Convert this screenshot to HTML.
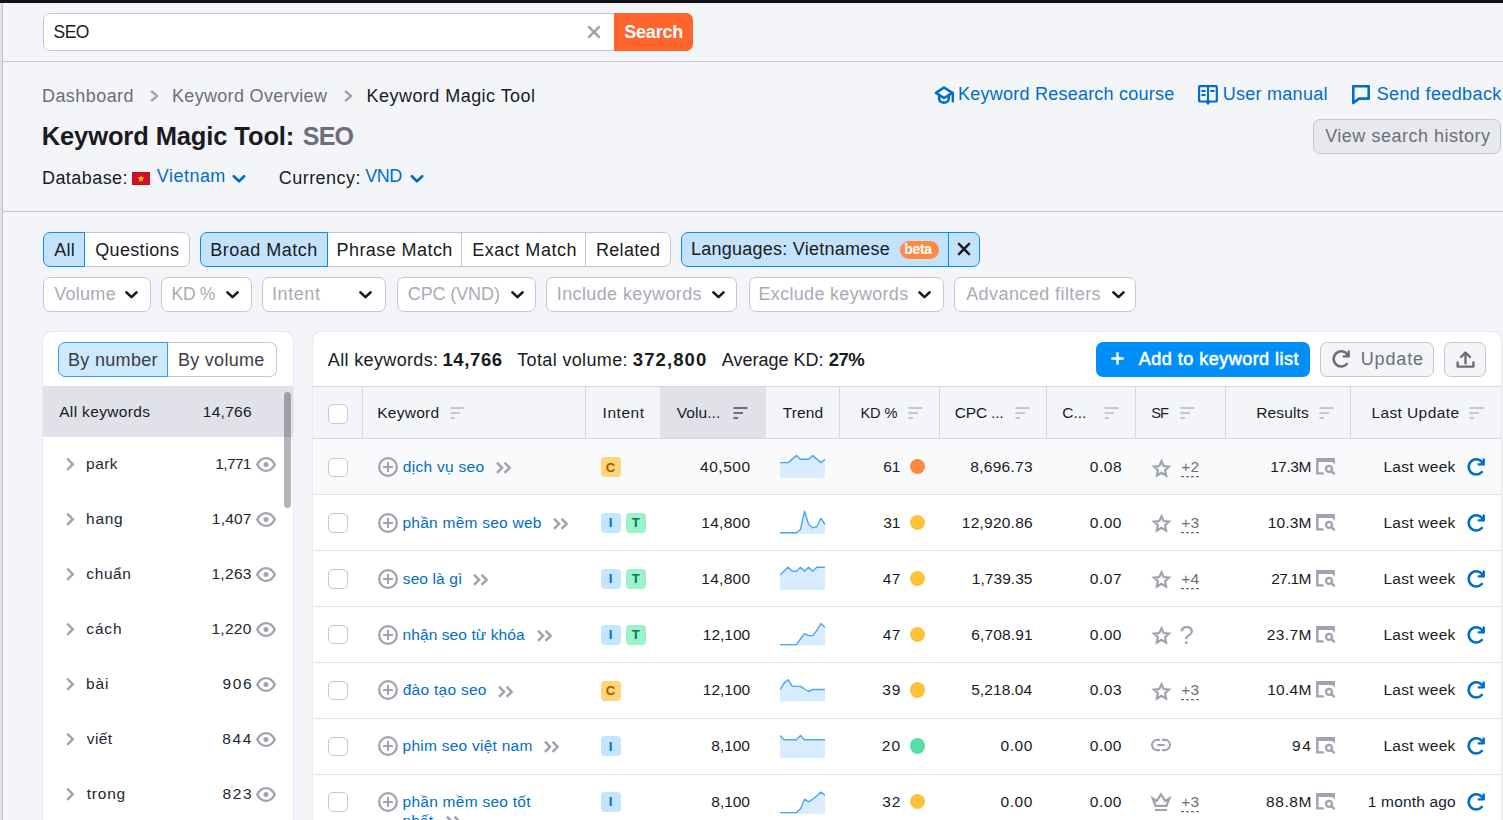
<!DOCTYPE html>
<html lang="en"><head><meta charset="utf-8"><title>Keyword Magic Tool: SEO</title>
<style>
html,body{margin:0;padding:0}
body{width:1503px;height:820px;overflow:hidden;background:#f4f5f9;font-family:"Liberation Sans", sans-serif;position:relative}
#root{position:absolute;left:0;top:0;width:1503px;height:820px;overflow:hidden}
#root div,#root svg{position:absolute;box-sizing:border-box}
.t{position:absolute;white-space:pre;line-height:1;display:block}
</style></head><body><div id="root">
<div style="left:0px;top:0px;width:1503px;height:3px;background:#111217"></div>
<div style="left:0px;top:3px;width:2px;height:817px;background:#e0e1e9"></div>
<div style="left:2px;top:3px;width:1px;height:817px;background:#c4c4c4"></div>
<div style="left:3px;top:61px;width:1500px;height:1px;background:#c4c7cf"></div>
<div style="left:3px;top:211px;width:1500px;height:1px;background:#c4c7cf"></div>
<div style="left:43px;top:13px;width:572px;height:38px;background:#fff;border:1px solid #c4c7cf;border-radius:7px 0 0 7px"></div>
<div style="left:614px;top:13px;width:79px;height:38px;background:#ff642d;border-radius:0 7px 7px 0"></div>
<svg style="left:586px;top:24px" width="16" height="16" viewBox="0 0 16 16"><path d="M3.1 3.1 L12.9 12.9 M12.9 3.1 L3.1 12.9" stroke="#a0a2b0" stroke-width="2.5" fill="none" stroke-linecap="round"/></svg>
<svg style="left:148px;top:88px" width="12" height="16" viewBox="0 0 12 16"><path d="M3.2 2.8 L9 8 L3.2 13.2" stroke="#a0a2b0" stroke-width="2.4" fill="none"/></svg>
<svg style="left:342px;top:88px" width="12" height="16" viewBox="0 0 12 16"><path d="M3.2 2.8 L9 8 L3.2 13.2" stroke="#a0a2b0" stroke-width="2.4" fill="none"/></svg>
<svg style="left:132px;top:172px" width="18" height="13" viewBox="0 0 18 13"><rect width="18" height="13" fill="#b50d1f"/><rect x="0.4" y="0.5" width="17.2" height="11.7" fill="#cf1126"/><polygon points="9,3 9.9,5.6 12.6,5.6 10.4,7.2 11.2,9.9 9,8.3 6.8,9.9 7.6,7.2 5.4,5.6 8.1,5.6" fill="#fdc91a"/></svg>
<svg style="left:232px;top:174px" width="14" height="10" viewBox="0 0 14 10"><path d="M1.8 2.2 L7 7.3 L12.2 2.2" stroke="#006dca" stroke-width="2.6" fill="none" stroke-linecap="round" stroke-linejoin="round"/></svg>
<svg style="left:410px;top:174px" width="14" height="10" viewBox="0 0 14 10"><path d="M1.8 2.2 L7 7.3 L12.2 2.2" stroke="#006dca" stroke-width="2.6" fill="none" stroke-linecap="round" stroke-linejoin="round"/></svg>
<svg style="left:933px;top:85px" width="23" height="21" viewBox="0 0 23 21"><path d="M11 2.5 L3 7.9 L11 13 L19.4 7.9 Z" stroke="#006dca" stroke-width="2.6" fill="none" stroke-linejoin="round"/><path d="M6.2 10.6 V14 C6.2 18.8 15.7 18.8 15.7 14 V10.6" stroke="#006dca" stroke-width="2.6" fill="none"/><path d="M19.8 8 V16.2" stroke="#006dca" stroke-width="2.4" fill="none" stroke-linecap="round"/></svg>
<svg style="left:1197px;top:84px" width="23" height="23" viewBox="0 0 23 23"><rect x="2.1" y="2.1" width="17.7" height="15.4" rx="0.8" stroke="#006dca" stroke-width="2.2" fill="none"/><path d="M11 2 V18" stroke="#006dca" stroke-width="2.1" fill="none"/><path d="M8.6 18 H13.4 L11 21.2 Z" fill="#006dca"/><path d="M5.2 7.1 H7.8 M5.2 11 H7.8 M14 7.1 H16.8" stroke="#006dca" stroke-width="2" fill="none" stroke-linecap="round"/></svg>
<svg style="left:1351px;top:84px" width="21" height="22" viewBox="0 0 21 22"><path d="M2.3 2.3 H17.7 V14.6 H8 L2.3 19 Z" stroke="#006dca" stroke-width="2.6" fill="none" stroke-linejoin="round"/></svg>
<div style="left:1313.4px;top:119px;width:188px;height:35px;background:#e8e9ee;border:1px solid #c4c7cf;border-radius:7px"></div>
<div style="left:84px;top:232px;width:106px;height:35px;background:#fff;border:1px solid #c4c7cf;border-radius:0 7px 7px 0"></div>
<div style="left:43px;top:232px;width:42px;height:35px;background:#c4e3fb;border:1px solid #008ff8;border-radius:7px 0 0 7px"></div>
<div style="left:327px;top:232px;width:344px;height:35px;background:#fff;border:1px solid #c4c7cf;border-radius:0 7px 7px 0"></div>
<div style="left:460.8px;top:233px;width:1px;height:33px;background:#c4c7cf"></div>
<div style="left:584.8px;top:233px;width:1px;height:33px;background:#c4c7cf"></div>
<div style="left:200px;top:232px;width:127.8px;height:35px;background:#c4e3fb;border:1px solid #008ff8;border-radius:7px 0 0 7px"></div>
<div style="left:681px;top:232px;width:299.4px;height:35px;background:#c4e3fb;border:1px solid #008ff8;border-radius:7px"></div>
<div style="left:948px;top:233px;width:1px;height:33px;background:#008ff8"></div>
<div style="left:900px;top:241px;width:38.5px;height:17.5px;background:#ff8b43;border-radius:9px"></div>
<svg style="left:956px;top:241px" width="17" height="17" viewBox="0 0 17 17"><path d="M2.9 2.9 L13.1 13.1 M13.1 2.9 L2.9 13.1" stroke="#191b23" stroke-width="2.5" fill="none" stroke-linecap="round"/></svg>
<div style="left:43px;top:277px;width:108px;height:35px;background:#fff;border:1px solid #c4c7cf;border-radius:7px"></div>
<svg style="left:124.4px;top:289px" width="15" height="12" viewBox="0 0 15 12"><path d="M2.35 3.25 L7.5 8.2 L12.65 3.25" stroke="#191b23" stroke-width="2.5" fill="none" stroke-linecap="round" stroke-linejoin="round"/></svg>
<div style="left:161px;top:277px;width:90.6px;height:35px;background:#fff;border:1px solid #c4c7cf;border-radius:7px"></div>
<svg style="left:225.4px;top:289px" width="15" height="12" viewBox="0 0 15 12"><path d="M2.35 3.25 L7.5 8.2 L12.65 3.25" stroke="#191b23" stroke-width="2.5" fill="none" stroke-linecap="round" stroke-linejoin="round"/></svg>
<div style="left:262px;top:277px;width:124.39999999999998px;height:35px;background:#fff;border:1px solid #c4c7cf;border-radius:7px"></div>
<svg style="left:358.4px;top:289px" width="15" height="12" viewBox="0 0 15 12"><path d="M2.35 3.25 L7.5 8.2 L12.65 3.25" stroke="#191b23" stroke-width="2.5" fill="none" stroke-linecap="round" stroke-linejoin="round"/></svg>
<div style="left:397.4px;top:277px;width:138.60000000000002px;height:35px;background:#fff;border:1px solid #c4c7cf;border-radius:7px"></div>
<svg style="left:509.8px;top:289px" width="15" height="12" viewBox="0 0 15 12"><path d="M2.35 3.25 L7.5 8.2 L12.65 3.25" stroke="#191b23" stroke-width="2.5" fill="none" stroke-linecap="round" stroke-linejoin="round"/></svg>
<div style="left:546.2px;top:277px;width:191.19999999999993px;height:35px;background:#fff;border:1px solid #c4c7cf;border-radius:7px"></div>
<svg style="left:711.4px;top:289px" width="15" height="12" viewBox="0 0 15 12"><path d="M2.35 3.25 L7.5 8.2 L12.65 3.25" stroke="#191b23" stroke-width="2.5" fill="none" stroke-linecap="round" stroke-linejoin="round"/></svg>
<div style="left:748.6px;top:277px;width:195.0px;height:35px;background:#fff;border:1px solid #c4c7cf;border-radius:7px"></div>
<svg style="left:917.4px;top:289px" width="15" height="12" viewBox="0 0 15 12"><path d="M2.35 3.25 L7.5 8.2 L12.65 3.25" stroke="#191b23" stroke-width="2.5" fill="none" stroke-linecap="round" stroke-linejoin="round"/></svg>
<div style="left:954.4px;top:277px;width:182.0000000000001px;height:35px;background:#fff;border:1px solid #c4c7cf;border-radius:7px"></div>
<svg style="left:1110.8px;top:289px" width="15" height="12" viewBox="0 0 15 12"><path d="M2.35 3.25 L7.5 8.2 L12.65 3.25" stroke="#191b23" stroke-width="2.5" fill="none" stroke-linecap="round" stroke-linejoin="round"/></svg>
<div style="left:43px;top:331.6px;width:249.6px;height:500px;background:#fff;border-radius:7px;box-shadow:0 0 1.2px 0 rgba(25,27,35,.32)"></div>
<div style="left:167px;top:342.4px;width:109.8px;height:35px;background:#fff;border:1px solid #c4c7cf;border-left:0;border-radius:0 7px 7px 0"></div>
<div style="left:58px;top:342.4px;width:110px;height:35px;background:#cde9fd;border:1px solid #2b9cf9;border-radius:7px 0 0 7px"></div>
<div style="left:43px;top:386px;width:249.8px;height:51px;background:#e0e1e9"></div>
<div style="left:284.2px;top:392px;width:6.8px;height:116px;background:rgba(25,27,35,.33);border-radius:4px"></div>
<svg style="left:64px;top:456px" width="12" height="16" viewBox="0 0 12 16"><path d="M3.2 2.6 L8.8 8.2 L3.2 13.8" stroke="#a0a2b0" stroke-width="2.4" fill="none"/></svg>
<svg style="left:255px;top:455.8px" width="22" height="17" viewBox="0 0 22 17"><path d="M2.2 8.5 C4.6 3.8 8 2.1 11 2.1 C14 2.1 17.4 3.8 19.8 8.5 C17.4 13.2 14 14.9 11 14.9 C8 14.9 4.6 13.2 2.2 8.5 Z" stroke="#a0a2b0" stroke-width="2.3" fill="none" stroke-linejoin="round"/><circle cx="11" cy="8.5" r="2.5" fill="#a0a2b0"/></svg>
<svg style="left:64px;top:511px" width="12" height="16" viewBox="0 0 12 16"><path d="M3.2 2.6 L8.8 8.2 L3.2 13.8" stroke="#a0a2b0" stroke-width="2.4" fill="none"/></svg>
<svg style="left:255px;top:510.8px" width="22" height="17" viewBox="0 0 22 17"><path d="M2.2 8.5 C4.6 3.8 8 2.1 11 2.1 C14 2.1 17.4 3.8 19.8 8.5 C17.4 13.2 14 14.9 11 14.9 C8 14.9 4.6 13.2 2.2 8.5 Z" stroke="#a0a2b0" stroke-width="2.3" fill="none" stroke-linejoin="round"/><circle cx="11" cy="8.5" r="2.5" fill="#a0a2b0"/></svg>
<svg style="left:64px;top:566px" width="12" height="16" viewBox="0 0 12 16"><path d="M3.2 2.6 L8.8 8.2 L3.2 13.8" stroke="#a0a2b0" stroke-width="2.4" fill="none"/></svg>
<svg style="left:255px;top:565.8px" width="22" height="17" viewBox="0 0 22 17"><path d="M2.2 8.5 C4.6 3.8 8 2.1 11 2.1 C14 2.1 17.4 3.8 19.8 8.5 C17.4 13.2 14 14.9 11 14.9 C8 14.9 4.6 13.2 2.2 8.5 Z" stroke="#a0a2b0" stroke-width="2.3" fill="none" stroke-linejoin="round"/><circle cx="11" cy="8.5" r="2.5" fill="#a0a2b0"/></svg>
<svg style="left:64px;top:621px" width="12" height="16" viewBox="0 0 12 16"><path d="M3.2 2.6 L8.8 8.2 L3.2 13.8" stroke="#a0a2b0" stroke-width="2.4" fill="none"/></svg>
<svg style="left:255px;top:620.8px" width="22" height="17" viewBox="0 0 22 17"><path d="M2.2 8.5 C4.6 3.8 8 2.1 11 2.1 C14 2.1 17.4 3.8 19.8 8.5 C17.4 13.2 14 14.9 11 14.9 C8 14.9 4.6 13.2 2.2 8.5 Z" stroke="#a0a2b0" stroke-width="2.3" fill="none" stroke-linejoin="round"/><circle cx="11" cy="8.5" r="2.5" fill="#a0a2b0"/></svg>
<svg style="left:64px;top:676px" width="12" height="16" viewBox="0 0 12 16"><path d="M3.2 2.6 L8.8 8.2 L3.2 13.8" stroke="#a0a2b0" stroke-width="2.4" fill="none"/></svg>
<svg style="left:255px;top:675.8px" width="22" height="17" viewBox="0 0 22 17"><path d="M2.2 8.5 C4.6 3.8 8 2.1 11 2.1 C14 2.1 17.4 3.8 19.8 8.5 C17.4 13.2 14 14.9 11 14.9 C8 14.9 4.6 13.2 2.2 8.5 Z" stroke="#a0a2b0" stroke-width="2.3" fill="none" stroke-linejoin="round"/><circle cx="11" cy="8.5" r="2.5" fill="#a0a2b0"/></svg>
<svg style="left:64px;top:731px" width="12" height="16" viewBox="0 0 12 16"><path d="M3.2 2.6 L8.8 8.2 L3.2 13.8" stroke="#a0a2b0" stroke-width="2.4" fill="none"/></svg>
<svg style="left:255px;top:730.8px" width="22" height="17" viewBox="0 0 22 17"><path d="M2.2 8.5 C4.6 3.8 8 2.1 11 2.1 C14 2.1 17.4 3.8 19.8 8.5 C17.4 13.2 14 14.9 11 14.9 C8 14.9 4.6 13.2 2.2 8.5 Z" stroke="#a0a2b0" stroke-width="2.3" fill="none" stroke-linejoin="round"/><circle cx="11" cy="8.5" r="2.5" fill="#a0a2b0"/></svg>
<svg style="left:64px;top:786px" width="12" height="16" viewBox="0 0 12 16"><path d="M3.2 2.6 L8.8 8.2 L3.2 13.8" stroke="#a0a2b0" stroke-width="2.4" fill="none"/></svg>
<svg style="left:255px;top:785.8px" width="22" height="17" viewBox="0 0 22 17"><path d="M2.2 8.5 C4.6 3.8 8 2.1 11 2.1 C14 2.1 17.4 3.8 19.8 8.5 C17.4 13.2 14 14.9 11 14.9 C8 14.9 4.6 13.2 2.2 8.5 Z" stroke="#a0a2b0" stroke-width="2.3" fill="none" stroke-linejoin="round"/><circle cx="11" cy="8.5" r="2.5" fill="#a0a2b0"/></svg>
<div style="left:313px;top:331.6px;width:1188px;height:500px;background:#fff;border-radius:7px;box-shadow:0 0 1.2px 0 rgba(25,27,35,.32)"></div>
<div style="left:1096px;top:342.4px;width:214px;height:35px;background:#008ff8;border-radius:7px"></div>
<svg style="left:1110.2px;top:351.4px" width="15" height="15" viewBox="0 0 15 15"><path d="M7.5 1.3 V13.7 M1.3 7.5 H13.7" stroke="#fff" stroke-width="2.3" fill="none"/></svg>
<div style="left:1320px;top:342.4px;width:114.4px;height:35px;background:#f4f5f9;border:1px solid #c4c7cf;border-radius:7px"></div>
<svg style="left:1331px;top:349px" width="21" height="20" viewBox="0 0 21 20"><path d="M16.2 5.2 A7.6 7.6 0 1 0 15.85 15" stroke="#6c6e79" stroke-width="2.6" fill="none" stroke-linecap="round"/><path d="M17.7 2.5 V7.4 H12.8" stroke="#6c6e79" stroke-width="2.4" fill="none" stroke-linejoin="round" stroke-linecap="round"/><path d="M17.7 3.6 V7.4 H13.9 Z" fill="#6c6e79"/></svg>
<div style="left:1443.8px;top:342.4px;width:42.2px;height:35px;background:#f4f5f9;border:1px solid #c4c7cf;border-radius:7px"></div>
<svg style="left:1454.8px;top:350px" width="21" height="19" viewBox="0 0 21 19"><path d="M10.5 13.2 V3.4 M6 7 L10.5 2.6 L15 7" stroke="#6c6e79" stroke-width="2.4" fill="none" stroke-linejoin="round" stroke-linecap="round"/><path d="M2.6 12.4 V16.6 H18.4 V12.4" stroke="#6c6e79" stroke-width="2.4" fill="none" stroke-linejoin="round" stroke-linecap="round"/></svg>
<div style="left:313px;top:386px;width:1188px;height:53px;background:#f4f5f9;border-top:1px solid #d6d8df;border-bottom:1px solid #d6d8df"></div>
<div style="left:660.4px;top:387px;width:105.2px;height:51px;background:#e0e1e9"></div>
<div style="left:362px;top:387px;width:1px;height:51px;background:#d6d8df"></div>
<div style="left:585.3px;top:387px;width:1px;height:51px;background:#d6d8df"></div>
<div style="left:838.8px;top:387px;width:1px;height:51px;background:#d6d8df"></div>
<div style="left:938.6px;top:387px;width:1px;height:51px;background:#d6d8df"></div>
<div style="left:1046px;top:387px;width:1px;height:51px;background:#d6d8df"></div>
<div style="left:1135px;top:387px;width:1px;height:51px;background:#d6d8df"></div>
<div style="left:1224.7px;top:387px;width:1px;height:51px;background:#d6d8df"></div>
<div style="left:1350.2px;top:387px;width:1px;height:51px;background:#d6d8df"></div>
<svg style="left:450px;top:406px" width="16" height="14" viewBox="0 0 16 14"><path d="M0.5 2 H14.5 M0.5 7 H10 M0.5 12 H5" stroke="#c4c7cf" stroke-width="2" fill="none"/></svg>
<svg style="left:732.6px;top:406px" width="16" height="14" viewBox="0 0 16 14"><path d="M0.5 2 H14.5 M0.5 7 H10 M0.5 12 H5" stroke="#6c6e79" stroke-width="2" fill="none"/></svg>
<svg style="left:908px;top:406px" width="16" height="14" viewBox="0 0 16 14"><path d="M0.5 2 H14.5 M0.5 7 H10 M0.5 12 H5" stroke="#c4c7cf" stroke-width="2" fill="none"/></svg>
<svg style="left:1014.6px;top:406px" width="16" height="14" viewBox="0 0 16 14"><path d="M0.5 2 H14.5 M0.5 7 H10 M0.5 12 H5" stroke="#c4c7cf" stroke-width="2" fill="none"/></svg>
<svg style="left:1104px;top:406px" width="16" height="14" viewBox="0 0 16 14"><path d="M0.5 2 H14.5 M0.5 7 H10 M0.5 12 H5" stroke="#c4c7cf" stroke-width="2" fill="none"/></svg>
<svg style="left:1180px;top:406px" width="16" height="14" viewBox="0 0 16 14"><path d="M0.5 2 H14.5 M0.5 7 H10 M0.5 12 H5" stroke="#c4c7cf" stroke-width="2" fill="none"/></svg>
<svg style="left:1319px;top:406px" width="16" height="14" viewBox="0 0 16 14"><path d="M0.5 2 H14.5 M0.5 7 H10 M0.5 12 H5" stroke="#c4c7cf" stroke-width="2" fill="none"/></svg>
<svg style="left:1469px;top:406px" width="16" height="14" viewBox="0 0 16 14"><path d="M0.5 2 H14.5 M0.5 7 H10 M0.5 12 H5" stroke="#c4c7cf" stroke-width="2" fill="none"/></svg>
<div style="left:328.4px;top:404.4px;width:19.4px;height:19.4px;background:#fff;border:1px solid #c4c7cf;border-radius:5px"></div>
<div style="left:313.5px;top:439px;width:1187px;height:55px;background:#f9fafc"></div>
<div style="left:313.5px;top:493.9px;width:1187px;height:1px;background:#e0e1e9"></div>
<div style="left:328.4px;top:457.5px;width:19.4px;height:19.4px;background:#fff;border:1px solid #c4c7cf;border-radius:5px"></div>
<svg style="left:378px;top:457.1px" width="20" height="20" viewBox="0 0 20 20"><circle cx="10" cy="10" r="8.85" stroke="#a0a2b0" stroke-width="2.3" fill="none"/><path d="M10 5.1 V14.9 M5.1 10 H14.9" stroke="#a0a2b0" stroke-width="2" fill="none"/></svg>
<svg style="left:495.0px;top:461.3px" width="17" height="14" viewBox="0 0 17 14"><path d="M2 1.7 L7 6.8 L2 11.9 M9.6 1.7 L14.6 6.8 L9.6 11.9" stroke="#a0a2b0" stroke-width="2.5" fill="none"/></svg>
<div style="left:601px;top:457.3px;width:20px;height:20px;background:#fdd679;border-radius:4px"></div>
<svg style="left:780.2px;top:438px" width="46" height="60" viewBox="0 0 46 60"><polygon points="0.0,24.6 4.1,24.6 8.2,24.6 12.3,21.1 16.4,17.6 20.5,21.3 24.5,21.3 28.6,21.3 32.7,17.6 36.8,21.1 40.9,24.6 45.0,21.3 45,39.7 0,39.7" fill="#d9ecfd"/><polyline points="0.0,24.6 4.1,24.6 8.2,24.6 12.3,21.1 16.4,17.6 20.5,21.3 24.5,21.3 28.6,21.3 32.7,17.6 36.8,21.1 40.9,24.6 45.0,21.3" stroke="#4aa8f0" stroke-width="1.4" fill="none" stroke-linejoin="round"/></svg>
<div style="left:910px;top:459.1px;width:15.4px;height:15.4px;background:#ff8840;border-radius:50%"></div>
<svg style="left:1150px;top:457.5px" width="23" height="22" viewBox="0 0 23 22"><path d="M11.50 3.20 L13.70 8.07 L19.01 8.66 L15.07 12.26 L16.14 17.49 L11.50 14.85 L6.86 17.49 L7.93 12.26 L3.99 8.66 L9.30 8.07 Z" stroke="#a0a2b0" stroke-width="2.2" fill="none" stroke-linejoin="miter"/></svg>
<svg style="left:1181px;top:475.9px" width="19" height="2" viewBox="0 0 19 2"><path d="M0 0.7 H18" stroke="#6c6e79" stroke-width="1.3" stroke-dasharray="3 2" fill="none"/></svg>
<svg style="left:1315px;top:457.1px" width="21" height="19" viewBox="0 0 21 19"><path d="M1.1 1 H19.9 V7.6 L17.3 5.2 V4.9 H3.5 V15.3 H8 L9.6 17.4 H1.1 Z" fill="#a0a2b0"/><circle cx="14" cy="11.75" r="3" stroke="#a0a2b0" stroke-width="2.25" fill="none"/><path d="M16.2 14 L19 16.6" stroke="#a0a2b0" stroke-width="2.4" fill="none" stroke-linecap="round"/></svg>
<svg style="left:1466px;top:457.1px" width="21" height="20" viewBox="0 0 21 20"><path d="M16.2 5.2 A7.6 7.6 0 1 0 15.85 15" stroke="#006dca" stroke-width="2.6" fill="none" stroke-linecap="round"/><path d="M17.7 2.5 V7.4 H12.8" stroke="#006dca" stroke-width="2.4" fill="none" stroke-linejoin="round" stroke-linecap="round"/><path d="M17.7 3.6 V7.4 H13.9 Z" fill="#006dca"/></svg>
<div style="left:313.5px;top:549.9px;width:1187px;height:1px;background:#e0e1e9"></div>
<div style="left:328.4px;top:513.3199999999999px;width:19.4px;height:19.4px;background:#fff;border:1px solid #c4c7cf;border-radius:5px"></div>
<svg style="left:378px;top:512.9px" width="20" height="20" viewBox="0 0 20 20"><circle cx="10" cy="10" r="8.85" stroke="#a0a2b0" stroke-width="2.3" fill="none"/><path d="M10 5.1 V14.9 M5.1 10 H14.9" stroke="#a0a2b0" stroke-width="2" fill="none"/></svg>
<svg style="left:552.4px;top:517.1px" width="17" height="14" viewBox="0 0 17 14"><path d="M2 1.7 L7 6.8 L2 11.9 M9.6 1.7 L14.6 6.8 L9.6 11.9" stroke="#a0a2b0" stroke-width="2.5" fill="none"/></svg>
<div style="left:601px;top:513.12px;width:20px;height:20px;background:#c4e5fe;border-radius:4px"></div>
<div style="left:626px;top:513.12px;width:20px;height:20px;background:#9ef2c9;border-radius:4px"></div>
<svg style="left:780.2px;top:494px" width="46" height="60" viewBox="0 0 46 60"><polygon points="0.0,38.8 4.1,38.8 8.2,38.8 12.3,38.8 16.4,38.8 20.5,35.5 24.5,17.3 28.6,30.5 32.7,33.8 36.8,32.7 40.9,24.3 45.0,30.5 45,39.9 0,39.9" fill="#d9ecfd"/><polyline points="0.0,38.8 4.1,38.8 8.2,38.8 12.3,38.8 16.4,38.8 20.5,35.5 24.5,17.3 28.6,30.5 32.7,33.8 36.8,32.7 40.9,24.3 45.0,30.5" stroke="#4aa8f0" stroke-width="1.4" fill="none" stroke-linejoin="round"/></svg>
<div style="left:910px;top:514.92px;width:15.4px;height:15.4px;background:#fdc23c;border-radius:50%"></div>
<svg style="left:1150px;top:513.3px" width="23" height="22" viewBox="0 0 23 22"><path d="M11.50 3.20 L13.70 8.07 L19.01 8.66 L15.07 12.26 L16.14 17.49 L11.50 14.85 L6.86 17.49 L7.93 12.26 L3.99 8.66 L9.30 8.07 Z" stroke="#a0a2b0" stroke-width="2.2" fill="none" stroke-linejoin="miter"/></svg>
<svg style="left:1181px;top:531.7px" width="19" height="2" viewBox="0 0 19 2"><path d="M0 0.7 H18" stroke="#6c6e79" stroke-width="1.3" stroke-dasharray="3 2" fill="none"/></svg>
<svg style="left:1315px;top:512.9px" width="21" height="19" viewBox="0 0 21 19"><path d="M1.1 1 H19.9 V7.6 L17.3 5.2 V4.9 H3.5 V15.3 H8 L9.6 17.4 H1.1 Z" fill="#a0a2b0"/><circle cx="14" cy="11.75" r="3" stroke="#a0a2b0" stroke-width="2.25" fill="none"/><path d="M16.2 14 L19 16.6" stroke="#a0a2b0" stroke-width="2.4" fill="none" stroke-linecap="round"/></svg>
<svg style="left:1466px;top:512.9px" width="21" height="20" viewBox="0 0 21 20"><path d="M16.2 5.2 A7.6 7.6 0 1 0 15.85 15" stroke="#006dca" stroke-width="2.6" fill="none" stroke-linecap="round"/><path d="M17.7 2.5 V7.4 H12.8" stroke="#006dca" stroke-width="2.4" fill="none" stroke-linejoin="round" stroke-linecap="round"/><path d="M17.7 3.6 V7.4 H13.9 Z" fill="#006dca"/></svg>
<div style="left:313.5px;top:605.9px;width:1187px;height:1px;background:#e0e1e9"></div>
<div style="left:328.4px;top:569.14px;width:19.4px;height:19.4px;background:#fff;border:1px solid #c4c7cf;border-radius:5px"></div>
<svg style="left:378px;top:568.7px" width="20" height="20" viewBox="0 0 20 20"><circle cx="10" cy="10" r="8.85" stroke="#a0a2b0" stroke-width="2.3" fill="none"/><path d="M10 5.1 V14.9 M5.1 10 H14.9" stroke="#a0a2b0" stroke-width="2" fill="none"/></svg>
<svg style="left:472.4px;top:572.9px" width="17" height="14" viewBox="0 0 17 14"><path d="M2 1.7 L7 6.8 L2 11.9 M9.6 1.7 L14.6 6.8 L9.6 11.9" stroke="#a0a2b0" stroke-width="2.5" fill="none"/></svg>
<div style="left:601px;top:568.9399999999999px;width:20px;height:20px;background:#c4e5fe;border-radius:4px"></div>
<div style="left:626px;top:568.9399999999999px;width:20px;height:20px;background:#9ef2c9;border-radius:4px"></div>
<svg style="left:780.2px;top:550px" width="46" height="60" viewBox="0 0 46 60"><polygon points="0.0,25.0 4.1,21.0 8.2,17.3 12.3,21.2 16.4,21.2 20.5,17.3 24.5,21.2 28.6,17.3 32.7,21.2 36.8,17.3 40.9,17.3 45.0,17.3 45,39.9 0,39.9" fill="#d9ecfd"/><polyline points="0.0,25.0 4.1,21.0 8.2,17.3 12.3,21.2 16.4,21.2 20.5,17.3 24.5,21.2 28.6,17.3 32.7,21.2 36.8,17.3 40.9,17.3 45.0,17.3" stroke="#4aa8f0" stroke-width="1.4" fill="none" stroke-linejoin="round"/></svg>
<div style="left:910px;top:570.74px;width:15.4px;height:15.4px;background:#fdc23c;border-radius:50%"></div>
<svg style="left:1150px;top:569.1px" width="23" height="22" viewBox="0 0 23 22"><path d="M11.50 3.20 L13.70 8.07 L19.01 8.66 L15.07 12.26 L16.14 17.49 L11.50 14.85 L6.86 17.49 L7.93 12.26 L3.99 8.66 L9.30 8.07 Z" stroke="#a0a2b0" stroke-width="2.2" fill="none" stroke-linejoin="miter"/></svg>
<svg style="left:1181px;top:587.5px" width="19" height="2" viewBox="0 0 19 2"><path d="M0 0.7 H18" stroke="#6c6e79" stroke-width="1.3" stroke-dasharray="3 2" fill="none"/></svg>
<svg style="left:1315px;top:568.7px" width="21" height="19" viewBox="0 0 21 19"><path d="M1.1 1 H19.9 V7.6 L17.3 5.2 V4.9 H3.5 V15.3 H8 L9.6 17.4 H1.1 Z" fill="#a0a2b0"/><circle cx="14" cy="11.75" r="3" stroke="#a0a2b0" stroke-width="2.25" fill="none"/><path d="M16.2 14 L19 16.6" stroke="#a0a2b0" stroke-width="2.4" fill="none" stroke-linecap="round"/></svg>
<svg style="left:1466px;top:568.7px" width="21" height="20" viewBox="0 0 21 20"><path d="M16.2 5.2 A7.6 7.6 0 1 0 15.85 15" stroke="#006dca" stroke-width="2.6" fill="none" stroke-linecap="round"/><path d="M17.7 2.5 V7.4 H12.8" stroke="#006dca" stroke-width="2.4" fill="none" stroke-linejoin="round" stroke-linecap="round"/><path d="M17.7 3.6 V7.4 H13.9 Z" fill="#006dca"/></svg>
<div style="left:313.5px;top:661.9px;width:1187px;height:1px;background:#e0e1e9"></div>
<div style="left:328.4px;top:624.96px;width:19.4px;height:19.4px;background:#fff;border:1px solid #c4c7cf;border-radius:5px"></div>
<svg style="left:378px;top:624.6px" width="20" height="20" viewBox="0 0 20 20"><circle cx="10" cy="10" r="8.85" stroke="#a0a2b0" stroke-width="2.3" fill="none"/><path d="M10 5.1 V14.9 M5.1 10 H14.9" stroke="#a0a2b0" stroke-width="2" fill="none"/></svg>
<svg style="left:536.0px;top:628.8px" width="17" height="14" viewBox="0 0 17 14"><path d="M2 1.7 L7 6.8 L2 11.9 M9.6 1.7 L14.6 6.8 L9.6 11.9" stroke="#a0a2b0" stroke-width="2.5" fill="none"/></svg>
<div style="left:601px;top:624.76px;width:20px;height:20px;background:#c4e5fe;border-radius:4px"></div>
<div style="left:626px;top:624.76px;width:20px;height:20px;background:#9ef2c9;border-radius:4px"></div>
<svg style="left:780.2px;top:605px" width="46" height="60" viewBox="0 0 46 60"><polygon points="0.0,39.6 4.1,39.6 8.2,39.6 12.3,39.6 16.4,39.6 20.5,34.0 24.5,28.6 28.6,30.6 32.7,30.6 36.8,25.5 40.9,18.6 45.0,22.4 45,40.4 0,40.4" fill="#d9ecfd"/><polyline points="0.0,39.6 4.1,39.6 8.2,39.6 12.3,39.6 16.4,39.6 20.5,34.0 24.5,28.6 28.6,30.6 32.7,30.6 36.8,25.5 40.9,18.6 45.0,22.4" stroke="#4aa8f0" stroke-width="1.4" fill="none" stroke-linejoin="round"/></svg>
<div style="left:910px;top:626.5600000000001px;width:15.4px;height:15.4px;background:#fdc23c;border-radius:50%"></div>
<svg style="left:1150px;top:625.0px" width="23" height="22" viewBox="0 0 23 22"><path d="M11.50 3.20 L13.70 8.07 L19.01 8.66 L15.07 12.26 L16.14 17.49 L11.50 14.85 L6.86 17.49 L7.93 12.26 L3.99 8.66 L9.30 8.07 Z" stroke="#a0a2b0" stroke-width="2.2" fill="none" stroke-linejoin="miter"/></svg>
<svg style="left:1315px;top:624.6px" width="21" height="19" viewBox="0 0 21 19"><path d="M1.1 1 H19.9 V7.6 L17.3 5.2 V4.9 H3.5 V15.3 H8 L9.6 17.4 H1.1 Z" fill="#a0a2b0"/><circle cx="14" cy="11.75" r="3" stroke="#a0a2b0" stroke-width="2.25" fill="none"/><path d="M16.2 14 L19 16.6" stroke="#a0a2b0" stroke-width="2.4" fill="none" stroke-linecap="round"/></svg>
<svg style="left:1466px;top:624.6px" width="21" height="20" viewBox="0 0 21 20"><path d="M16.2 5.2 A7.6 7.6 0 1 0 15.85 15" stroke="#006dca" stroke-width="2.6" fill="none" stroke-linecap="round"/><path d="M17.7 2.5 V7.4 H12.8" stroke="#006dca" stroke-width="2.4" fill="none" stroke-linejoin="round" stroke-linecap="round"/><path d="M17.7 3.6 V7.4 H13.9 Z" fill="#006dca"/></svg>
<div style="left:313.5px;top:717.9px;width:1187px;height:1px;background:#e0e1e9"></div>
<div style="left:328.4px;top:680.78px;width:19.4px;height:19.4px;background:#fff;border:1px solid #c4c7cf;border-radius:5px"></div>
<svg style="left:378px;top:680.4px" width="20" height="20" viewBox="0 0 20 20"><circle cx="10" cy="10" r="8.85" stroke="#a0a2b0" stroke-width="2.3" fill="none"/><path d="M10 5.1 V14.9 M5.1 10 H14.9" stroke="#a0a2b0" stroke-width="2" fill="none"/></svg>
<svg style="left:497.4px;top:684.6px" width="17" height="14" viewBox="0 0 17 14"><path d="M2 1.7 L7 6.8 L2 11.9 M9.6 1.7 L14.6 6.8 L9.6 11.9" stroke="#a0a2b0" stroke-width="2.5" fill="none"/></svg>
<div style="left:601px;top:680.5799999999999px;width:20px;height:20px;background:#fdd679;border-radius:4px"></div>
<svg style="left:780.2px;top:661px" width="46" height="60" viewBox="0 0 46 60"><polygon points="0.0,28.5 4.1,22.1 8.2,18.7 12.3,25.4 16.4,25.4 20.5,25.4 24.5,28.0 28.6,30.5 32.7,28.5 36.8,28.5 40.9,28.5 45.0,28.5 45,40.5 0,40.5" fill="#d9ecfd"/><polyline points="0.0,28.5 4.1,22.1 8.2,18.7 12.3,25.4 16.4,25.4 20.5,25.4 24.5,28.0 28.6,30.5 32.7,28.5 36.8,28.5 40.9,28.5 45.0,28.5" stroke="#4aa8f0" stroke-width="1.4" fill="none" stroke-linejoin="round"/></svg>
<div style="left:910px;top:682.38px;width:15.4px;height:15.4px;background:#fdc23c;border-radius:50%"></div>
<svg style="left:1150px;top:680.8px" width="23" height="22" viewBox="0 0 23 22"><path d="M11.50 3.20 L13.70 8.07 L19.01 8.66 L15.07 12.26 L16.14 17.49 L11.50 14.85 L6.86 17.49 L7.93 12.26 L3.99 8.66 L9.30 8.07 Z" stroke="#a0a2b0" stroke-width="2.2" fill="none" stroke-linejoin="miter"/></svg>
<svg style="left:1181px;top:699.2px" width="19" height="2" viewBox="0 0 19 2"><path d="M0 0.7 H18" stroke="#6c6e79" stroke-width="1.3" stroke-dasharray="3 2" fill="none"/></svg>
<svg style="left:1315px;top:680.4px" width="21" height="19" viewBox="0 0 21 19"><path d="M1.1 1 H19.9 V7.6 L17.3 5.2 V4.9 H3.5 V15.3 H8 L9.6 17.4 H1.1 Z" fill="#a0a2b0"/><circle cx="14" cy="11.75" r="3" stroke="#a0a2b0" stroke-width="2.25" fill="none"/><path d="M16.2 14 L19 16.6" stroke="#a0a2b0" stroke-width="2.4" fill="none" stroke-linecap="round"/></svg>
<svg style="left:1466px;top:680.4px" width="21" height="20" viewBox="0 0 21 20"><path d="M16.2 5.2 A7.6 7.6 0 1 0 15.85 15" stroke="#006dca" stroke-width="2.6" fill="none" stroke-linecap="round"/><path d="M17.7 2.5 V7.4 H12.8" stroke="#006dca" stroke-width="2.4" fill="none" stroke-linejoin="round" stroke-linecap="round"/><path d="M17.7 3.6 V7.4 H13.9 Z" fill="#006dca"/></svg>
<div style="left:313.5px;top:773.9px;width:1187px;height:1px;background:#e0e1e9"></div>
<div style="left:328.4px;top:736.6px;width:19.4px;height:19.4px;background:#fff;border:1px solid #c4c7cf;border-radius:5px"></div>
<svg style="left:378px;top:736.2px" width="20" height="20" viewBox="0 0 20 20"><circle cx="10" cy="10" r="8.85" stroke="#a0a2b0" stroke-width="2.3" fill="none"/><path d="M10 5.1 V14.9 M5.1 10 H14.9" stroke="#a0a2b0" stroke-width="2" fill="none"/></svg>
<svg style="left:542.8px;top:740.4px" width="17" height="14" viewBox="0 0 17 14"><path d="M2 1.7 L7 6.8 L2 11.9 M9.6 1.7 L14.6 6.8 L9.6 11.9" stroke="#a0a2b0" stroke-width="2.5" fill="none"/></svg>
<div style="left:601px;top:736.4px;width:20px;height:20px;background:#c4e5fe;border-radius:4px"></div>
<svg style="left:780.2px;top:717px" width="46" height="60" viewBox="0 0 46 60"><polygon points="0.0,18.6 4.1,22.7 8.2,22.7 12.3,22.7 16.4,22.7 20.5,18.6 24.5,22.7 28.6,22.7 32.7,22.7 36.8,22.7 40.9,22.7 45.0,22.7 45,40.9 0,40.9" fill="#d9ecfd"/><polyline points="0.0,18.6 4.1,22.7 8.2,22.7 12.3,22.7 16.4,22.7 20.5,18.6 24.5,22.7 28.6,22.7 32.7,22.7 36.8,22.7 40.9,22.7 45.0,22.7" stroke="#4aa8f0" stroke-width="1.4" fill="none" stroke-linejoin="round"/></svg>
<div style="left:910px;top:738.2px;width:15.4px;height:15.4px;background:#59ddaa;border-radius:50%"></div>
<svg style="left:1150px;top:738.2px" width="22" height="14" viewBox="0 0 22 14"><path d="M9.9 1.9 H7.1 A5.1 5.1 0 0 0 7.1 12.1 H9.9 M12 1.9 H14.9 A5.1 5.1 0 0 1 14.9 12.1 H12" stroke="#a0a2b0" stroke-width="2.1" fill="none"/><path d="M8 7 H13.9" stroke="#a0a2b0" stroke-width="2" fill="none" stroke-linecap="round"/></svg>
<svg style="left:1315px;top:736.2px" width="21" height="19" viewBox="0 0 21 19"><path d="M1.1 1 H19.9 V7.6 L17.3 5.2 V4.9 H3.5 V15.3 H8 L9.6 17.4 H1.1 Z" fill="#a0a2b0"/><circle cx="14" cy="11.75" r="3" stroke="#a0a2b0" stroke-width="2.25" fill="none"/><path d="M16.2 14 L19 16.6" stroke="#a0a2b0" stroke-width="2.4" fill="none" stroke-linecap="round"/></svg>
<svg style="left:1466px;top:736.2px" width="21" height="20" viewBox="0 0 21 20"><path d="M16.2 5.2 A7.6 7.6 0 1 0 15.85 15" stroke="#006dca" stroke-width="2.6" fill="none" stroke-linecap="round"/><path d="M17.7 2.5 V7.4 H12.8" stroke="#006dca" stroke-width="2.4" fill="none" stroke-linejoin="round" stroke-linecap="round"/><path d="M17.7 3.6 V7.4 H13.9 Z" fill="#006dca"/></svg>
<div style="left:313.5px;top:900px;width:1187px;height:1px;background:#e0e1e9"></div>
<div style="left:328.4px;top:792.4200000000001px;width:19.4px;height:19.4px;background:#fff;border:1px solid #c4c7cf;border-radius:5px"></div>
<svg style="left:378px;top:792.0px" width="20" height="20" viewBox="0 0 20 20"><circle cx="10" cy="10" r="8.85" stroke="#a0a2b0" stroke-width="2.3" fill="none"/><path d="M10 5.1 V14.9 M5.1 10 H14.9" stroke="#a0a2b0" stroke-width="2" fill="none"/></svg>
<svg style="left:445px;top:814.6px" width="17" height="14" viewBox="0 0 17 14"><path d="M2 1.7 L7 6.8 L2 11.9 M9.6 1.7 L14.6 6.8 L9.6 11.9" stroke="#a0a2b0" stroke-width="2.5" fill="none"/></svg>
<div style="left:601px;top:792.22px;width:20px;height:20px;background:#c4e5fe;border-radius:4px"></div>
<svg style="left:780.2px;top:773px" width="46" height="60" viewBox="0 0 46 60"><polygon points="0.0,39.6 4.1,39.6 8.2,39.6 12.3,39.6 16.4,39.6 20.5,35.7 24.5,26.2 28.6,28.8 32.7,26.2 36.8,22.9 40.9,19.1 45.0,22.1 45,40.8 0,40.8" fill="#d9ecfd"/><polyline points="0.0,39.6 4.1,39.6 8.2,39.6 12.3,39.6 16.4,39.6 20.5,35.7 24.5,26.2 28.6,28.8 32.7,26.2 36.8,22.9 40.9,19.1 45.0,22.1" stroke="#4aa8f0" stroke-width="1.4" fill="none" stroke-linejoin="round"/></svg>
<div style="left:910px;top:794.0200000000001px;width:15.4px;height:15.4px;background:#fdc23c;border-radius:50%"></div>
<svg style="left:1150px;top:791.0px" width="23" height="22" viewBox="0 0 23 22"><path d="M2.7 7.5 L6.7 10 L11 3.3 L15.3 10 L19.3 7.5 L16.5 14.8 H5.5 Z" stroke="#a0a2b0" stroke-width="2.2" fill="none" stroke-linejoin="miter"/><path d="M5 19 H17.1" stroke="#a0a2b0" stroke-width="2.1" fill="none"/></svg>
<svg style="left:1181px;top:810.8px" width="19" height="2" viewBox="0 0 19 2"><path d="M0 0.7 H18" stroke="#6c6e79" stroke-width="1.3" stroke-dasharray="3 2" fill="none"/></svg>
<svg style="left:1315px;top:792.0px" width="21" height="19" viewBox="0 0 21 19"><path d="M1.1 1 H19.9 V7.6 L17.3 5.2 V4.9 H3.5 V15.3 H8 L9.6 17.4 H1.1 Z" fill="#a0a2b0"/><circle cx="14" cy="11.75" r="3" stroke="#a0a2b0" stroke-width="2.25" fill="none"/><path d="M16.2 14 L19 16.6" stroke="#a0a2b0" stroke-width="2.4" fill="none" stroke-linecap="round"/></svg>
<svg style="left:1466px;top:792.0px" width="21" height="20" viewBox="0 0 21 20"><path d="M16.2 5.2 A7.6 7.6 0 1 0 15.85 15" stroke="#006dca" stroke-width="2.6" fill="none" stroke-linecap="round"/><path d="M17.7 2.5 V7.4 H12.8" stroke="#006dca" stroke-width="2.4" fill="none" stroke-linejoin="round" stroke-linecap="round"/><path d="M17.7 3.6 V7.4 H13.9 Z" fill="#006dca"/></svg>
<span class="t" style="left:53.50px;top:23.50px;font-size:17.5px;color:#191b23;letter-spacing:-0.542px;">SEO</span>
<span class="t" style="left:624.26px;top:23.25px;font-size:18px;color:#fff;font-weight:700;letter-spacing:-0.198px;">Search</span>
<span class="t" style="left:41.97px;top:87.25px;font-size:18px;color:#6c6e79;letter-spacing:0.440px;">Dashboard</span>
<span class="t" style="left:171.97px;top:87.25px;font-size:18px;color:#6c6e79;letter-spacing:0.325px;">Keyword Overview</span>
<span class="t" style="left:366.57px;top:87.25px;font-size:18px;color:#191b23;letter-spacing:0.455px;">Keyword Magic Tool</span>
<span class="t" style="left:41.73px;top:123.50px;font-size:25.5px;color:#191b23;font-weight:700;letter-spacing:-0.108px;">Keyword Magic Tool:</span>
<span class="t" style="left:302.79px;top:123.75px;font-size:25px;color:#6c6e79;font-weight:700;letter-spacing:-0.780px;">SEO</span>
<span class="t" style="left:41.97px;top:169.25px;font-size:18px;color:#191b23;letter-spacing:0.439px;">Database:</span>
<span class="t" style="left:156.77px;top:167.25px;font-size:18px;color:#006dca;letter-spacing:0.482px;">Vietnam</span>
<span class="t" style="left:278.77px;top:169.25px;font-size:18px;color:#191b23;letter-spacing:0.464px;">Currency:</span>
<span class="t" style="left:365.17px;top:167.25px;font-size:18px;color:#006dca;letter-spacing:-0.432px;">VND</span>
<span class="t" style="left:957.97px;top:85.25px;font-size:18px;color:#006dca;letter-spacing:0.239px;">Keyword Research course</span>
<span class="t" style="left:1222.64px;top:85.25px;font-size:18px;color:#006dca;letter-spacing:0.283px;">User manual</span>
<span class="t" style="left:1376.70px;top:85.25px;font-size:18px;color:#006dca;letter-spacing:0.373px;">Send feedback</span>
<span class="t" style="left:1325.17px;top:127.25px;font-size:18px;color:#6c6e79;letter-spacing:0.507px;">View search history</span>
<span class="t" style="left:54.18px;top:241.25px;font-size:18px;color:#191b23;letter-spacing:0.245px;">All</span>
<span class="t" style="left:95.20px;top:241.25px;font-size:18px;color:#191b23;letter-spacing:0.341px;">Questions</span>
<span class="t" style="left:210.17px;top:241.25px;font-size:18px;color:#191b23;letter-spacing:0.511px;">Broad Match</span>
<span class="t" style="left:336.57px;top:241.25px;font-size:18px;color:#191b23;letter-spacing:0.429px;">Phrase Match</span>
<span class="t" style="left:472.17px;top:241.25px;font-size:18px;color:#191b23;letter-spacing:0.531px;">Exact Match</span>
<span class="t" style="left:595.97px;top:241.25px;font-size:18px;color:#191b23;letter-spacing:0.321px;">Related</span>
<span class="t" style="left:690.97px;top:240.25px;font-size:18px;color:#191b23;letter-spacing:0.243px;">Languages: Vietnamese</span>
<span class="t" style="left:904.17px;top:242.25px;font-size:14px;color:#fff;font-weight:700;letter-spacing:-0.292px;">beta</span>
<span class="t" style="left:54.17px;top:285.25px;font-size:18px;color:#a9abb6;letter-spacing:0.292px;">Volume</span>
<span class="t" style="left:171.60px;top:285.50px;font-size:17.5px;color:#a9abb6;letter-spacing:-0.299px;">KD %</span>
<span class="t" style="left:271.99px;top:285.25px;font-size:18px;color:#a9abb6;letter-spacing:0.581px;">Intent</span>
<span class="t" style="left:407.77px;top:285.25px;font-size:18px;color:#a9abb6;letter-spacing:-0.111px;">CPC (VND)</span>
<span class="t" style="left:556.79px;top:285.25px;font-size:18px;color:#a9abb6;letter-spacing:0.383px;">Include keywords</span>
<span class="t" style="left:758.57px;top:285.25px;font-size:18px;color:#a9abb6;letter-spacing:0.304px;">Exclude keywords</span>
<span class="t" style="left:966.18px;top:285.25px;font-size:18px;color:#a9abb6;letter-spacing:0.423px;">Advanced filters</span>
<span class="t" style="left:67.97px;top:351.25px;font-size:18px;color:#3b3d47;letter-spacing:0.323px;">By number</span>
<span class="t" style="left:177.97px;top:351.25px;font-size:18px;color:#3b3d47;letter-spacing:0.283px;">By volume</span>
<span class="t" style="left:59.18px;top:404.00px;font-size:15.5px;color:#191b23;letter-spacing:0.351px;">All keywords</span>
<span class="t" style="left:202.84px;top:404.00px;font-size:15.5px;color:#191b23;letter-spacing:0.266px;">14,766</span>
<span class="t" style="left:86.10px;top:456.00px;font-size:15.5px;color:#24262f;letter-spacing:0.445px;">park</span>
<span class="t" style="left:215.24px;top:456.00px;font-size:15.5px;color:#24262f;letter-spacing:-0.632px;">1,771</span>
<span class="t" style="left:86.10px;top:511.00px;font-size:15.5px;color:#24262f;letter-spacing:0.664px;">hang</span>
<span class="t" style="left:211.84px;top:511.00px;font-size:15.5px;color:#24262f;letter-spacing:0.218px;">1,407</span>
<span class="t" style="left:86.35px;top:566.00px;font-size:15.5px;color:#24262f;letter-spacing:0.591px;">chuẩn</span>
<span class="t" style="left:211.44px;top:566.00px;font-size:15.5px;color:#24262f;letter-spacing:0.316px;">1,263</span>
<span class="t" style="left:86.35px;top:621.00px;font-size:15.5px;color:#24262f;letter-spacing:0.827px;">cách</span>
<span class="t" style="left:211.44px;top:621.00px;font-size:15.5px;color:#24262f;letter-spacing:0.288px;">1,220</span>
<span class="t" style="left:86.10px;top:676.00px;font-size:15.5px;color:#24262f;letter-spacing:0.835px;">bài</span>
<span class="t" style="left:222.46px;top:676.00px;font-size:15.5px;color:#24262f;letter-spacing:1.600px;">906</span>
<span class="t" style="left:86.78px;top:731.00px;font-size:15.5px;color:#24262f;letter-spacing:0.362px;">viết</span>
<span class="t" style="left:222.32px;top:731.00px;font-size:15.5px;color:#24262f;letter-spacing:1.549px;">844</span>
<span class="t" style="left:86.81px;top:786.00px;font-size:15.5px;color:#24262f;letter-spacing:0.771px;">trong</span>
<span class="t" style="left:222.51px;top:786.00px;font-size:15.5px;color:#24262f;letter-spacing:1.600px;">823</span>
<span class="t" style="left:327.78px;top:351.25px;font-size:18px;color:#191b23;letter-spacing:0.358px;">All keywords:</span>
<span class="t" style="left:442.47px;top:350.50px;font-size:18.5px;color:#191b23;font-weight:700;letter-spacing:0.603px;">14,766</span>
<span class="t" style="left:517.24px;top:351.25px;font-size:18px;color:#191b23;letter-spacing:0.354px;">Total volume:</span>
<span class="t" style="left:632.81px;top:350.50px;font-size:18.5px;color:#191b23;font-weight:700;letter-spacing:1.096px;">372,800</span>
<span class="t" style="left:721.78px;top:351.25px;font-size:18px;color:#191b23;letter-spacing:-0.007px;">Average KD:</span>
<span class="t" style="left:828.79px;top:350.50px;font-size:18.5px;color:#191b23;font-weight:700;letter-spacing:-0.492px;">27%</span>
<span class="t" style="left:1138.78px;top:350.25px;font-size:18px;color:#fff;letter-spacing:0.484px;-webkit-text-stroke:0.55px #fff;">Add to keyword list</span>
<span class="t" style="left:1360.64px;top:350.25px;font-size:18px;color:#6c6e79;letter-spacing:0.877px;">Update</span>
<span class="t" style="left:377.18px;top:405.00px;font-size:15.5px;color:#191b23;letter-spacing:0.286px;">Keyword</span>
<span class="t" style="left:602.60px;top:405.00px;font-size:15.5px;color:#191b23;letter-spacing:0.527px;">Intent</span>
<span class="t" style="left:676.75px;top:405.00px;font-size:15.5px;color:#191b23;letter-spacing:0.075px;">Volu...</span>
<span class="t" style="left:782.70px;top:405.00px;font-size:15.5px;color:#191b23;letter-spacing:0.145px;">Trend</span>
<span class="t" style="left:860.42px;top:405.95px;font-size:14.6px;color:#191b23;letter-spacing:-0.065px;">KD %</span>
<span class="t" style="left:954.84px;top:405.00px;font-size:15.5px;color:#191b23;letter-spacing:-0.208px;">CPC ...</span>
<span class="t" style="left:1062.24px;top:405.00px;font-size:15.5px;color:#191b23;letter-spacing:-0.015px;">C...</span>
<span class="t" style="left:1151.16px;top:405.95px;font-size:14.6px;color:#191b23;letter-spacing:-0.800px;">SF</span>
<span class="t" style="left:1256.18px;top:405.00px;font-size:15.5px;color:#191b23;letter-spacing:0.151px;">Results</span>
<span class="t" style="left:1371.38px;top:405.00px;font-size:15.5px;color:#191b23;letter-spacing:0.406px;">Last Update</span>
<span class="t" style="left:402.73px;top:459.00px;font-size:15.5px;color:#006dca;letter-spacing:0.301px;">dịch vụ seo</span>
<span class="t" style="left:605.86px;top:461.15px;font-size:13.2px;color:#a75800;font-weight:700;">C</span>
<span class="t" style="left:700.08px;top:459.00px;font-size:15.5px;color:#191b23;letter-spacing:0.527px;">40,500</span>
<span class="t" style="left:883.27px;top:459.00px;font-size:15.5px;color:#191b23;letter-spacing:-0.185px;">61</span>
<span class="t" style="left:970.32px;top:459.00px;font-size:15.5px;color:#191b23;letter-spacing:0.268px;">8,696.73</span>
<span class="t" style="left:1089.79px;top:459.00px;font-size:15.5px;color:#191b23;letter-spacing:0.551px;">0.08</span>
<span class="t" style="left:1181.29px;top:459.00px;font-size:15.5px;color:#6c6e79;letter-spacing:0.290px;">+2</span>
<span class="t" style="left:1270.24px;top:459.00px;font-size:15.5px;color:#191b23;letter-spacing:-0.494px;">17.3M</span>
<span class="t" style="left:1383.38px;top:459.00px;font-size:15.5px;color:#191b23;letter-spacing:0.262px;">Last week</span>
<span class="t" style="left:402.50px;top:515.00px;font-size:15.5px;color:#006dca;letter-spacing:0.245px;">phần mềm seo web</span>
<span class="t" style="left:608.80px;top:516.15px;font-size:13.2px;color:#006dca;font-weight:700;">I</span>
<span class="t" style="left:631.80px;top:516.15px;font-size:13.2px;color:#007c65;font-weight:700;">T</span>
<span class="t" style="left:701.24px;top:515.00px;font-size:15.5px;color:#191b23;letter-spacing:0.295px;">14,800</span>
<span class="t" style="left:883.27px;top:515.00px;font-size:15.5px;color:#191b23;letter-spacing:-0.185px;">31</span>
<span class="t" style="left:961.84px;top:515.00px;font-size:15.5px;color:#191b23;letter-spacing:0.227px;">12,920.86</span>
<span class="t" style="left:1089.79px;top:515.00px;font-size:15.5px;color:#191b23;letter-spacing:0.513px;">0.00</span>
<span class="t" style="left:1181.29px;top:515.00px;font-size:15.5px;color:#6c6e79;letter-spacing:0.276px;">+3</span>
<span class="t" style="left:1267.84px;top:515.00px;font-size:15.5px;color:#191b23;letter-spacing:0.106px;">10.3M</span>
<span class="t" style="left:1383.38px;top:515.00px;font-size:15.5px;color:#191b23;letter-spacing:0.262px;">Last week</span>
<span class="t" style="left:402.79px;top:571.00px;font-size:15.5px;color:#006dca;letter-spacing:0.111px;">seo là gì</span>
<span class="t" style="left:608.80px;top:572.15px;font-size:13.2px;color:#006dca;font-weight:700;">I</span>
<span class="t" style="left:631.80px;top:572.15px;font-size:13.2px;color:#007c65;font-weight:700;">T</span>
<span class="t" style="left:701.24px;top:571.00px;font-size:15.5px;color:#191b23;letter-spacing:0.295px;">14,800</span>
<span class="t" style="left:882.68px;top:571.00px;font-size:15.5px;color:#191b23;letter-spacing:0.409px;">47</span>
<span class="t" style="left:971.84px;top:571.00px;font-size:15.5px;color:#191b23;letter-spacing:0.042px;">1,739.35</span>
<span class="t" style="left:1089.79px;top:571.00px;font-size:15.5px;color:#191b23;letter-spacing:0.566px;">0.07</span>
<span class="t" style="left:1181.29px;top:571.00px;font-size:15.5px;color:#6c6e79;letter-spacing:0.069px;">+4</span>
<span class="t" style="left:1271.27px;top:571.00px;font-size:15.5px;color:#191b23;letter-spacing:-0.750px;">27.1M</span>
<span class="t" style="left:1383.38px;top:571.00px;font-size:15.5px;color:#191b23;letter-spacing:0.262px;">Last week</span>
<span class="t" style="left:402.50px;top:627.00px;font-size:15.5px;color:#006dca;letter-spacing:0.091px;">nhận seo từ khóa</span>
<span class="t" style="left:608.80px;top:628.15px;font-size:13.2px;color:#006dca;font-weight:700;">I</span>
<span class="t" style="left:631.80px;top:628.15px;font-size:13.2px;color:#007c65;font-weight:700;">T</span>
<span class="t" style="left:702.84px;top:627.00px;font-size:15.5px;color:#191b23;letter-spacing:-0.025px;">12,100</span>
<span class="t" style="left:882.68px;top:627.00px;font-size:15.5px;color:#191b23;letter-spacing:0.409px;">47</span>
<span class="t" style="left:971.27px;top:627.00px;font-size:15.5px;color:#191b23;letter-spacing:0.138px;">6,708.91</span>
<span class="t" style="left:1089.79px;top:627.00px;font-size:15.5px;color:#191b23;letter-spacing:0.513px;">0.00</span>
<span class="t" style="left:1179.44px;top:622.50px;font-size:25.5px;color:#a0a2b0;">?</span>
<span class="t" style="left:1266.67px;top:627.00px;font-size:15.5px;color:#191b23;letter-spacing:0.400px;">23.7M</span>
<span class="t" style="left:1383.38px;top:627.00px;font-size:15.5px;color:#191b23;letter-spacing:0.262px;">Last week</span>
<span class="t" style="left:402.73px;top:682.00px;font-size:15.5px;color:#006dca;letter-spacing:0.268px;">đào tạo seo</span>
<span class="t" style="left:605.86px;top:684.15px;font-size:13.2px;color:#a75800;font-weight:700;">C</span>
<span class="t" style="left:702.84px;top:682.00px;font-size:15.5px;color:#191b23;letter-spacing:-0.025px;">12,100</span>
<span class="t" style="left:882.27px;top:682.00px;font-size:15.5px;color:#191b23;letter-spacing:0.815px;">39</span>
<span class="t" style="left:971.16px;top:682.00px;font-size:15.5px;color:#191b23;letter-spacing:0.096px;">5,218.04</span>
<span class="t" style="left:1089.79px;top:682.00px;font-size:15.5px;color:#191b23;letter-spacing:0.554px;">0.03</span>
<span class="t" style="left:1181.29px;top:682.00px;font-size:15.5px;color:#6c6e79;letter-spacing:0.276px;">+3</span>
<span class="t" style="left:1267.24px;top:682.00px;font-size:15.5px;color:#191b23;letter-spacing:0.256px;">10.4M</span>
<span class="t" style="left:1383.38px;top:682.00px;font-size:15.5px;color:#191b23;letter-spacing:0.262px;">Last week</span>
<span class="t" style="left:402.50px;top:738.00px;font-size:15.5px;color:#006dca;letter-spacing:0.256px;">phim seo việt nam</span>
<span class="t" style="left:608.80px;top:740.15px;font-size:13.2px;color:#006dca;font-weight:700;">I</span>
<span class="t" style="left:711.32px;top:738.00px;font-size:15.5px;color:#191b23;letter-spacing:-0.033px;">8,100</span>
<span class="t" style="left:881.87px;top:738.00px;font-size:15.5px;color:#191b23;letter-spacing:1.062px;">20</span>
<span class="t" style="left:1000.39px;top:738.00px;font-size:15.5px;color:#191b23;letter-spacing:0.647px;">0.00</span>
<span class="t" style="left:1089.79px;top:738.00px;font-size:15.5px;color:#191b23;letter-spacing:0.513px;">0.00</span>
<span class="t" style="left:1291.97px;top:738.00px;font-size:15.5px;color:#191b23;letter-spacing:1.600px;">94</span>
<span class="t" style="left:1383.38px;top:738.00px;font-size:15.5px;color:#191b23;letter-spacing:0.262px;">Last week</span>
<span class="t" style="left:402.50px;top:794.00px;font-size:15.5px;color:#006dca;letter-spacing:0.264px;">phần mềm seo tốt</span>
<span class="t" style="left:402.50px;top:813.00px;font-size:15.5px;color:#006dca;letter-spacing:0.123px;">nhất</span>
<span class="t" style="left:608.80px;top:795.15px;font-size:13.2px;color:#006dca;font-weight:700;">I</span>
<span class="t" style="left:711.32px;top:794.00px;font-size:15.5px;color:#191b23;letter-spacing:-0.033px;">8,100</span>
<span class="t" style="left:882.27px;top:794.00px;font-size:15.5px;color:#191b23;letter-spacing:0.824px;">32</span>
<span class="t" style="left:1000.39px;top:794.00px;font-size:15.5px;color:#191b23;letter-spacing:0.647px;">0.00</span>
<span class="t" style="left:1089.79px;top:794.00px;font-size:15.5px;color:#191b23;letter-spacing:0.513px;">0.00</span>
<span class="t" style="left:1181.29px;top:794.00px;font-size:15.5px;color:#6c6e79;letter-spacing:0.276px;">+3</span>
<span class="t" style="left:1266.12px;top:794.00px;font-size:15.5px;color:#191b23;letter-spacing:0.536px;">88.8M</span>
<span class="t" style="left:1367.84px;top:794.00px;font-size:15.5px;color:#191b23;letter-spacing:0.157px;">1 month ago</span>
</div></body></html>
